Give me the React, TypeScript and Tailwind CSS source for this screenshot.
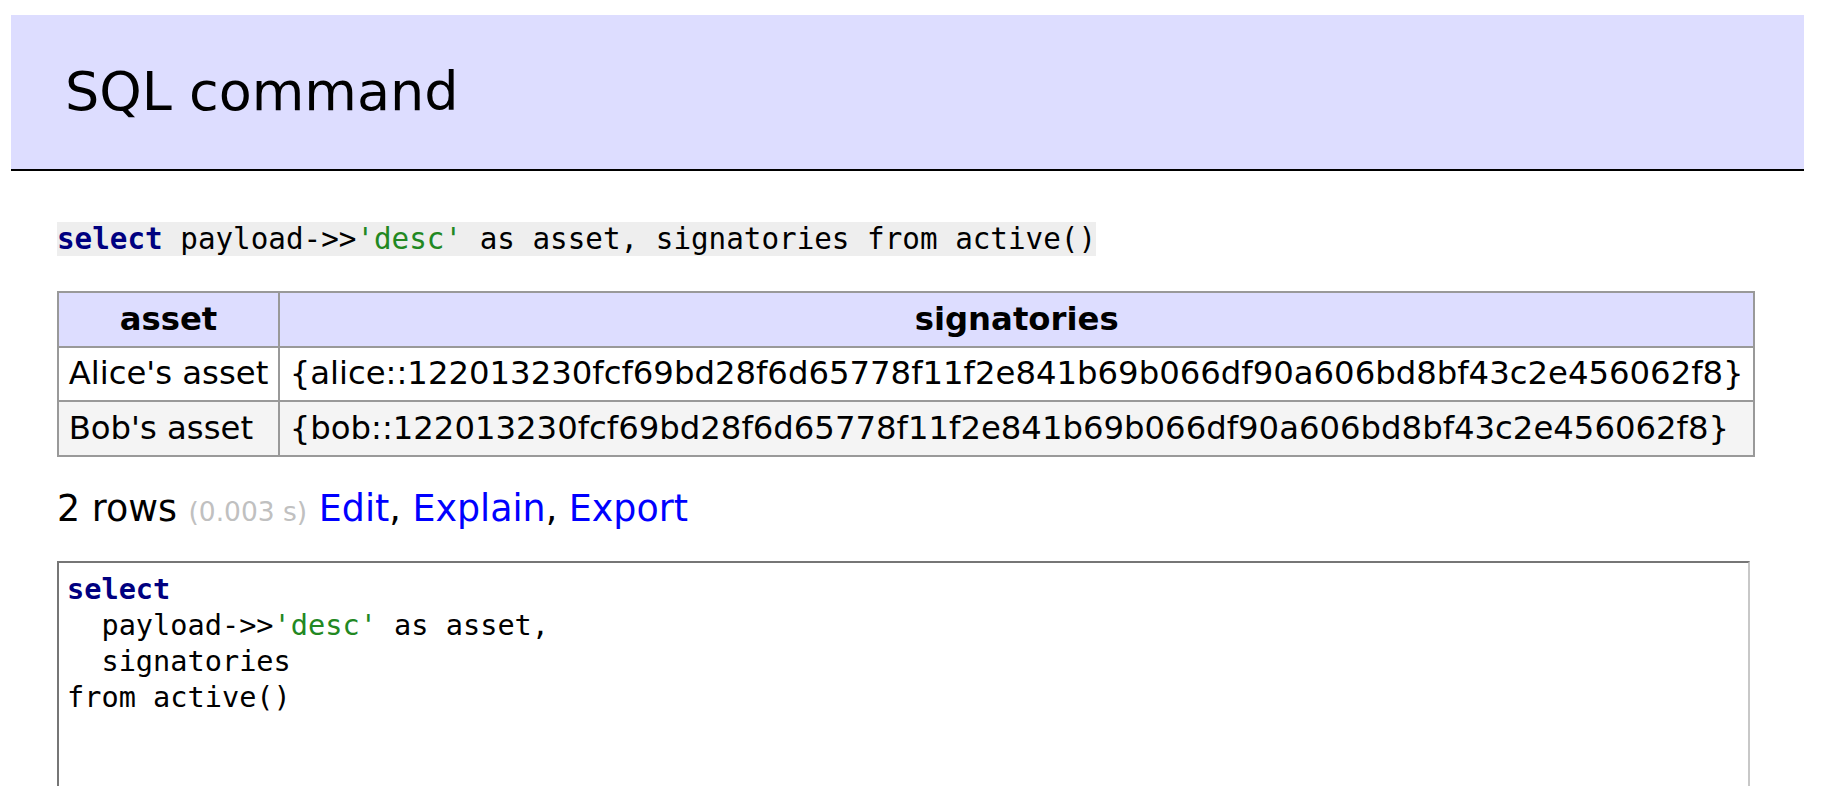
import React from 'react';

const HASH = '122013230fcf69bd28f6d65778f11f2e841b69b066df90a606bd8bf43c2e456062f8';

const rows = [
  { asset: "Alice's asset", signatories: `{alice::${HASH}}` },
  { asset: "Bob's asset", signatories: `{bob::${HASH}}` },
];

const Kw = ({ children }: { children: React.ReactNode }) => (
  <span className="font-bold text-[#000080]">{children}</span>
);

const Str = ({ children }: { children: React.ReactNode }) => (
  <span className="text-[#228822]">{children}</span>
);

export default function App() {
  return (
    <div className="min-h-screen bg-white pt-[15px] pl-[11px] pr-[22px] font-['DejaVu_Sans',Verdana,sans-serif] text-black">
      {/* page title */}
      <h2 className="bg-[#ddf] border-b-2 border-black px-[54px] py-[43px] text-[54px] leading-[68px] font-normal">
        SQL command
      </h2>

      <div className="pl-[46px]">
        {/* executed query */}
        <p className="mt-[43px] text-[36px] leading-[45px]">
          <code className="bg-[#eee] font-['DejaVu_Sans_Mono',monospace] text-[29.25px]">
            <Kw>select</Kw> payload-&gt;&gt;<Str>'desc'</Str> as asset, signatories from active()
          </code>
        </p>

        {/* result table */}
        <table className="mt-[29px] border-collapse text-[32.3px] leading-[39.5px]">
          <thead>
            <tr className="bg-[#ddf]">
              <th className="border-2 border-[#999] px-[9.7px] py-[6.5px] font-bold text-center">asset</th>
              <th className="border-2 border-[#999] px-[9.7px] py-[6.5px] font-bold text-center">signatories</th>
            </tr>
          </thead>
          <tbody>
            {rows.map((r, i) => (
              <tr key={r.asset} className={i % 2 === 1 ? 'bg-[#f4f4f4]' : 'bg-white'}>
                <td className="border-2 border-[#999] px-[9.7px] py-[6.5px] whitespace-nowrap">{r.asset}</td>
                <td className="border-2 border-[#999] px-[9.7px] py-[6.5px] whitespace-nowrap">{r.signatories}</td>
              </tr>
            ))}
          </tbody>
        </table>

        {/* row count + actions */}
        <p className="mt-[29px] text-[36.4px] leading-[45px] whitespace-nowrap">
          2 rows <span className="text-[26.5px] text-[#c0c0c0]">(0.003 s)</span>{' '}
          <a href="#" className="text-[#0000ff]">Edit</a>,{' '}
          <a href="#" className="text-[#0000ff]">Explain</a>,{' '}
          <a href="#" className="text-[#0000ff]">Export</a>
        </p>

        {/* editor */}
        <pre className="mt-[27px] w-[1693px] h-[320px] border-2 border-t-[#767676] border-l-[#767676] border-r-[#c8c8c8] border-b-[#c8c8c8] px-[8px] py-[8px] font-['DejaVu_Sans_Mono',monospace] text-[28.6px] leading-[36px] text-black">
          <Kw>select</Kw>
          {'\n  payload->>'}
          <Str>'desc'</Str>
          {' as asset,\n  signatories\nfrom active()'}
        </pre>
      </div>
    </div>
  );
}
